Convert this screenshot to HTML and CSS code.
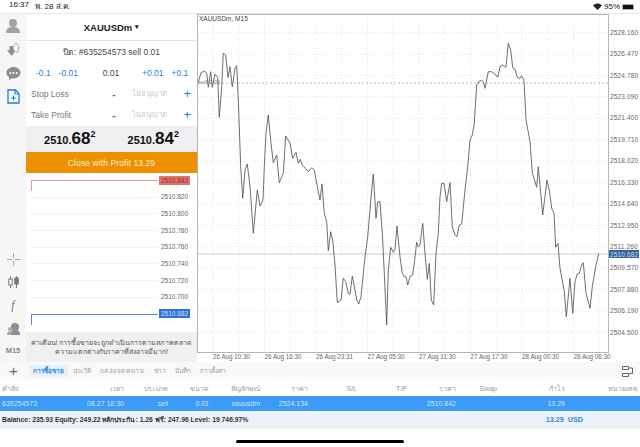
FILE: index.html
```html
<!DOCTYPE html>
<html lang="th">
<head>
<meta charset="utf-8">
<title>XAUUSDm</title>
<link rel="stylesheet" href="styles.css">
</head>
<body>
<div class="status">
  <span class="status-left"><span>16:37</span><span>พ. 28 ส.ค.</span></span>
  <span class="status-right">
    <svg class="wifi" width="9" height="7" viewBox="0 0 9 7"><path d="M0 2.400A6.500 6.500 0 0 1 9 2.400L4.500 7Z" fill="#222"/></svg>
    <span>95%</span>
    <span class="battery"><span class="battery-fill"></span></span>
  </span>
</div>
<div class="main">
  <nav class="rail">
    <div class="rail-group">
      <svg class="rail-icon" width="16" height="16" viewBox="0 0 16 16"><circle cx="8" cy="5" r="4" fill="#a3a3a3"/><path d="M1 15c0-5 3-6 7-6s7 1 7 6z" fill="#a3a3a3"/></svg>
      <svg class="rail-icon" width="16" height="16" viewBox="0 0 16 16"><path d="M2 8h2.500V4h4v4H11l-4.500 6z" fill="#8e8e8e"/><path d="M9 6h-1.500l3.500-5 3.500 5H13v4h-2.500" fill="#fff" stroke="#a0a0a0" stroke-width=".8"/></svg>
      <svg class="rail-icon" width="15" height="15" viewBox="0 0 15 15"><path d="M7.500 1C3.500 1 .5 3.500.5 6.800c0 2 1.100 3.700 2.800 4.700L3 14l3.300-1.700c.4 0 .8.100 1.200.100 4 0 7-2.500 7-5.600S11.500 1 7.500 1z" fill="#8e8e8e"/><circle cx="4.300" cy="7" r="1" fill="#fff"/><circle cx="7.500" cy="7" r="1" fill="#fff"/><circle cx="10.700" cy="7" r="1" fill="#fff"/></svg>
      <svg class="rail-icon" width="13" height="15" viewBox="0 0 13 15"><path d="M1 1h7.500L12 4.500V14H1z" fill="#fff" stroke="#1a7fe8" stroke-width="1.300"/><path d="M8 1v4h4M6.500 6.500v5M4 9h5" fill="none" stroke="#1a7fe8" stroke-width="1.200"/></svg>
    </div>
    <div class="rail-group rail-group-low">
      <svg class="rail-icon" width="13" height="13" viewBox="0 0 13 13"><path d="M6.500 0v5M6.500 8v5M0 6.500h5M8 6.500h5" stroke="#a8a8a8" stroke-width="1"/></svg>
      <svg class="rail-icon" width="11" height="12" viewBox="0 0 11 12"><path d="M2.500 0v12M8.500 0v12" stroke="#777"/><rect x=".8" y="3" width="3.400" height="6" fill="#fff" stroke="#777"/><rect x="6.800" y="2" width="3.400" height="6" fill="#777" stroke="#777"/></svg>
      <span class="rail-f">f</span>
      <svg class="rail-icon" width="13" height="14" viewBox="0 0 13 14"><circle cx="8" cy="5" r="4" fill="#8e8e8e"/><path d="M3 13c0-4 2-5 5-5s5 1 5 5z" fill="#8e8e8e"/><circle cx="3" cy="7" r="2" fill="#a8a8a8"/><path d="M0 13c0-3 1-4 3-4l1 4z" fill="#a8a8a8"/></svg>
      <span class="rail-tf">M15</span>
    </div>
  </nav>

  <section class="panel">
    <header class="symbol">XAUUSDm <span class="caret">▾</span></header>
    <div class="ticket">ปิด: #635254573 sell 0.01</div>
    <div class="lots">
      <span class="lot-group"><span>-0.1</span><span>-0.01</span></span>
      <span class="lot-value">0.01</span>
      <span class="lot-group"><span>+0.01</span><span>+0.1</span></span>
    </div>
    <div class="level">
      <span class="level-name">Stop Loss</span>
      <span class="level-minus">-</span>
      <span class="level-value">ไม่อนุญาต</span>
      <span class="level-plus">+</span>
    </div>
    <div class="level">
      <span class="level-name">Take Profit</span>
      <span class="level-minus">-</span>
      <span class="level-value">ไม่อนุญาต</span>
      <span class="level-plus">+</span>
    </div>
    <div class="quotes">
      <span class="quote">2510.<b>68</b><sup>2</sup></span>
      <span class="quote">2510.<b>84</b><sup>2</sup></span>
    </div>
    <button class="close-btn">Close with Profit 13.29</button>
    <div class="ladder">
      <div class="rung rung-ask"><i></i><span>2510.842</span></div>
      <div class="rung"><i></i><span>2510.820</span></div>
      <div class="rung"><i></i><span>2510.800</span></div>
      <div class="rung"><i></i><span>2510.780</span></div>
      <div class="rung"><i></i><span>2510.760</span></div>
      <div class="rung"><i></i><span>2510.740</span></div>
      <div class="rung"><i></i><span>2510.720</span></div>
      <div class="rung"><i></i><span>2510.700</span></div>
      <div class="rung rung-bid"><i></i><span>2510.682</span></div>
    </div>
    <div class="warning"><span>ค่าเตือน! การซื้อขายจะถูกดำเนินการตามสภาพตลาด</span><span>ความแตกต่างกับราคาที่ส่งอาจมีมาก!</span></div>
  </section>

  <svg class="chart" width="443" height="348" viewBox="197 14 443 348">
    <g class="grid">
      <path d="M198 32.700H608M198 54H608M198 75.300H608M198 96.700H608M198 118H608M198 139.500H608M198 161H608M198 182.300H608M198 204H608M198 225.300H608M198 246.700H608M198 268H608M198 289.300H608M198 311H608M198 332.300H608"/>
      <path d="M213 15V352M238.800 15V352M264.500 15V352M290.300 15V352M316 15V352M341.800 15V352M367.500 15V352M393.300 15V352M419 15V352M444.800 15V352M470.500 15V352M496.300 15V352M522 15V352M547.800 15V352M573.500 15V352M599.300 15V352"/>
    </g>
    <path class="open-line" d="M198 83H608"/>
    <path class="price-line" d="M198 254H608"/>
    <text class="chart-title" x="199" y="21">XAUUSDm, M15</text>
    <text class="open-label" x="198" y="84">sell 0.01</text>
    <polyline class="series" points="198.300,81.700 201,72.700 204.300,71 206.700,73.300 208.300,87.300 210.700,71.700 212.300,87.300 215,74 217.700,77.300 219.300,117.300 221.700,86.700 223.300,53.300 225.700,55 228,77.300 230,66.700 232.300,86.700 235,68.300 236.700,65.700 238.300,100 240.700,166.700 242.700,198.300 245,170 247.300,164 250,186.700 253.300,233.300 257.300,190 260,206 263,200 264.300,166.700 266,133.300 268.300,115 271,143.300 273.300,162.700 276.700,155 279.300,182.700 283.300,173.300 285.700,136 290,143.300 292.700,158.300 296,152.300 298.300,163.300 300.300,159.300 302.300,165 308.300,171.700 311.700,167.700 314.300,170 317.700,188.300 320,200 322,184 324.300,213.300 326.700,221.700 328.300,250.700 330.700,231.700 332.700,240 335,265 337.300,302.700 341,300 343.300,278.300 345.700,281.700 348.300,293.300 350,294.300 352.300,276 355,290 356.700,300 358.700,304 361,296.700 365,256.700 367.700,236.700 371.700,190 373.300,174 376,218.300 377.700,201.700 380,201.700 382.300,233.300 384.300,273.300 386.700,325 388.300,270 390.700,247.300 393.300,252.300 395,249.300 397,226 400,256.700 402.300,273.300 404.300,276.700 406,276.700 407.700,285 410.300,276 412.700,275 414.300,263.300 416.700,242.300 418.300,246.700 420,245 422.700,223.300 425,253.300 427.300,279.300 429.300,263.300 431.300,300 433.700,305 436,253.300 438.300,233.300 440,196.700 441.700,183.300 444,183.300 446.700,201.700 450,182.700 452.300,226.700 455,235 457,236.700 459.300,225 461.700,224 465,190 467.700,166.700 470,140 472.300,135 474.300,123.300 476.700,85 479.300,81 481.700,80 483.300,81.700 485,88.300 488.300,71.700 491.700,71.700 495,74 497.700,77.300 500,66.700 502.700,65 506,67.300 508.300,43.300 510.700,50 512.700,67.700 515,69 517.300,77.300 520,78.300 521.700,75.700 524,80 526,120 530,141.700 532.300,172.700 536.700,187.300 538.300,166.700 542.700,215 547,180 549.300,190 551.700,208.300 554,213.300 555.700,247.300 558,243.300 560,268.300 564.300,291.700 566.300,316.700 570,278.300 572.700,313.300 575,281.700 577.300,274 579.300,273.300 581.700,265 583.300,262.700 586,293.300 590,308.300 592.300,286.700 596,265 598.700,253.300"/>
    <rect class="frame" x="197.500" y="14.500" width="411" height="338"/>
    <g class="axis">
      <text x="610" y="35">2528.160</text>
      <text x="610" y="56.300">2526.470</text>
      <text x="610" y="77.700">2524.780</text>
      <text x="610" y="99">2523.090</text>
      <text x="610" y="120.300">2521.400</text>
      <text x="610" y="142">2519.710</text>
      <text x="610" y="163.300">2518.020</text>
      <text x="610" y="184.700">2516.330</text>
      <text x="610" y="206.300">2514.640</text>
      <text x="610" y="227.700">2512.950</text>
      <text x="610" y="249">2511.260</text>
      <text x="610" y="270.300">2509.570</text>
      <text x="610" y="291.700">2507.880</text>
      <text x="610" y="313.300">2506.190</text>
      <text x="610" y="334.700">2504.500</text>
    </g>
    <rect class="bid-tag" x="609" y="250" width="30" height="8"/>
    <text class="bid-text" x="610" y="256.500">2510.682</text>
    <g class="axis axis-time">
      <text x="213" y="359">26 Aug 10:30</text>
      <text x="264.500" y="359">26 Aug 16:30</text>
      <text x="316" y="359">26 Aug 23:31</text>
      <text x="367.500" y="359">27 Aug 05:30</text>
      <text x="419" y="359">27 Aug 11:30</text>
      <text x="470.500" y="359">27 Aug 17:30</text>
      <text x="522" y="359">28 Aug 00:30</text>
      <text x="573.500" y="359">28 Aug 06:30</text>
    </g>
  </svg>
</div>

<div class="tabs">
  <span class="tab-add">+</span>
  <span class="tab tab-active">การซื้อขาย</span>
  <span class="tab">ประวัติ</span>
  <span class="tab tab-wide">กล่องจดหมาย</span>
  <span class="tab">ข่าว</span>
  <span class="tab">บันทึก</span>
  <span class="tab">การตั้งค่า</span>
  <svg class="tab-icon" width="11" height="11" viewBox="0 0 11 11"><path d="M.5.500h6v3h-6zM.5 7.500h6v3h-6zM6.500 2h4v5.500h-4" fill="none" stroke="#555" stroke-width=".9"/></svg>
</div>

<div class="row row-head">
  <span class="c c1">คำสั่ง</span><span class="c c2">เวลา</span><span class="c c3">ประเภท</span><span class="c c4">ขนาด</span><span class="c c5">สัญลักษณ์</span><span class="c c6">ราคา</span><span class="c c7">S/L</span><span class="c c8">T/P</span><span class="c c9">ราคา</span><span class="c c10">Swap</span><span class="c c11">กำไร</span><span class="c c12">หมายเหตุ</span>
</div>
<div class="row row-sel">
  <span class="c c1">635254573</span><span class="c c2">08.27 18:30</span><span class="c c3">sell</span><span class="c c4">0.01</span><span class="c c5">xauusdm</span><span class="c c6">2524.134</span><span class="c c7"></span><span class="c c8"></span><span class="c c9">2510.842</span><span class="c c10"></span><span class="c c11">13.29</span><span class="c c12"></span>
</div>
<div class="balance">
  <span>Balance: 235.93 Equity: 249.22 หลักประกัน: 1.26 ฟรี: 247.96 Level: 19 746.97%</span>
  <span class="balance-profit">13.29&nbsp; USD</span>
</div>
<div class="home"><span class="home-bar"></span></div>
</body>
</html>
```

FILE: styles.css
```css
* { box-sizing: border-box; }
html, body { margin: 0; padding: 0; }
body {
  width: 640px;
  height: 447px;
  overflow: hidden;
  background: #fff;
  font-family: "Liberation Sans", "Noto Sans", "Noto Sans CJK SC", sans-serif;
  color: #333;
}
.status {
  height: 13px;
  display: flex;
  justify-content: space-between;
  align-items: center;
  padding: 0 6px 0 9px;
  font-size: 8px;
  color: #222;
}
.status-left { display: flex; gap: 6px; }
.status-right { display: flex; align-items: center; gap: 2px; }
.battery { width: 12px; height: 6px; border: 1px solid #aaa; border-radius: 1px; display: flex; }
.battery-fill { flex: 1; background: #111; }

.main { display: flex; height: 349px; background: #fff; border-top: 1px solid #e8e8e8; }
.rail {
  width: 26px;
  flex: none;
  display: flex;
  flex-direction: column;
  justify-content: space-between;
  align-items: center;
  padding: 4px 0 7px;
  background: #f6f6f6;
}
.rail-group { display: flex; flex-direction: column; align-items: center; gap: 8px; }
.rail-group-low { gap: 10px; }
.rail-icon { display: block; flex: none; }
.rail-f { font: italic 12px "Liberation Serif", serif; color: #777; line-height: 14px; }
.rail-tf { font-size: 7.5px; font-weight: bold; color: #888; line-height: 9px; }

.panel { width: 171px; flex: none; display: flex; flex-direction: column; background: #fff; }
.symbol {
  height: 27px;
  flex: none;
  display: flex;
  align-items: center;
  justify-content: center;
  gap: 3px;
  border-bottom: 1px solid #e4e4e4;
  font-size: 9.5px;
  font-weight: bold;
  color: #222;
}
.caret { font-size: 7px; }
.ticket { height: 21px; flex: none; display: flex; align-items: center; justify-content: center; font-size: 8.5px; color: #444; }
.lots { height: 21px; flex: none; display: flex; align-items: center; justify-content: space-between; padding: 0 10px; font-size: 8.5px; color: #1a80e8; }
.lot-group { display: flex; gap: 8px; width: 44px; }
.lot-group:last-child { width: 45px; }
.lot-value { color: #444; }
.level { height: 21px; flex: none; display: flex; align-items: center; padding: 0 6px 0 5px; font-size: 8.5px; color: #777; }
.level-name { width: 81px; }
.level-minus { width: 10px; color: #1a80e8; font-weight: bold; font-size: 11px; }
.level-value { width: 55px; text-align: center; color: #ccc; font-size: 8px; }
.level-plus { color: #1a80e8; font-size: 13px; text-align: right; flex: 1; line-height: 1; }
.quotes { height: 26px; flex: none; display: flex; align-items: center; justify-content: space-around; padding: 0 2px; background: #f0f0f3; font-size: 11px; font-weight: bold; color: #111; margin-top: 1px; }
.quote { display: inline-flex; align-items: baseline; }
.quote b { font-size: 17px; }
.quote sup { font-size: 9px; vertical-align: baseline; align-self: flex-start; line-height: 11px; }
.close-btn { height: 21px; flex: none; border: 0; padding: 0; background: #ee9000; color: #fdeccf; font: 8.5px "Liberation Sans", sans-serif; letter-spacing: .1px; }

.ladder { flex: 1; display: flex; flex-direction: column; padding: 2.500px 7px 0 5px; font-size: 6.5px; color: #666; }
.rung { height: 16.700px; flex: none; display: flex; align-items: flex-start; }
.rung i { flex: 1; height: 0; margin: 4.500px 1px 0 0; border-top: 1px dotted #e6e6e6; }
.rung span { width: 31px; height: 9px; line-height: 9px; text-align: center; }
.rung-ask i { height: 11px; border-top: 1px solid #e09a90; border-left: 1px solid #e09a90; }
.rung-ask span { background: #e2736a; color: #8d2f28; }
.rung-bid i { height: 11px; border-top: 1px solid #4a8fe0; border-left: 1px solid #4a8fe0; }
.rung-bid span { background: #2d74d8; color: #cfe0f7; }
.warning { height: 30px; flex: none; display: flex; flex-direction: column; align-items: center; justify-content: center; background: #f0f0f0; font-size: 7px; line-height: 9.500px; color: #555; white-space: nowrap; }

.chart { display: block; flex: none; background: #fff; }
.grid path { fill: none; stroke: #e6e6e6; stroke-width: 1; stroke-dasharray: 1 2; }
.open-line { fill: none; stroke: #bbb; stroke-width: 1; stroke-dasharray: 2 2; }
.price-line { fill: none; stroke: #ccd; stroke-width: 1; }
.frame { fill: none; stroke: #b5b5b5; stroke-width: 1; }
.series { fill: none; stroke: #555; stroke-width: .85; stroke-linejoin: round; }
.chart-title { font-size: 6.5px; fill: #444; }
.open-label { font-size: 6px; fill: #888; }
.axis text { font-size: 6.5px; fill: #666; letter-spacing: .15px; }
.axis-time text { letter-spacing: 0; font-size: 6.3px; }
.bid-tag { fill: #33659f; }
.bid-text { font-size: 6.5px; fill: #cfdcf0; letter-spacing: .15px; }

.tabs { height: 18px; display: flex; align-items: center; gap: 9px; padding: 0 7px; background: #f9f9f9; font-size: 6.5px; color: #999; }
.tab-add { width: 13px; color: #666; font-size: 15px; line-height: 14px; text-align: center; }
.tab { white-space: nowrap; }
.tab-active { padding: 1px 4px; margin-right: -4.500px; background: #e6f1fd; color: #2d8ae8; font-weight: bold; }
.tab-wide { letter-spacing: .6px; }
.tab-icon { margin-left: auto; }

.row { height: 16px; display: flex; align-items: center; font-size: 7px; }
.row-head { color: #999; background: #fff; }
.row-sel { height: 15px; background: #3d9bf6; color: #cfe6fd; }
.c { flex: none; white-space: nowrap; }
.c1 { width: 43px; padding-left: 2px; }
.c2 { width: 81px; text-align: right; }
.c3 { width: 44px; text-align: right; }
.c4 { width: 41px; text-align: right; }
.c5 { width: 51px; text-align: right; }
.c6 { width: 48px; text-align: right; }
.c7 { width: 49px; text-align: right; }
.c8 { width: 50px; text-align: right; }
.c9 { width: 49px; text-align: right; }
.c10 { width: 41px; text-align: right; }
.c11 { width: 68px; text-align: right; }
.c12 { width: 75px; text-align: right; padding-right: 2px; }
.balance { height: 17px; display: flex; align-items: center; padding-left: 2px; background: #ecf2f9; font-size: 6.8px; font-weight: bold; color: #333; }
.balance-profit { margin-left: auto; margin-right: 57px; color: #2d8ae8; font-size: 7.2px; }
.home { height: 19px; display: flex; justify-content: center; padding-top: 11px; border-top: 1px solid #f4f4f4; }
.home-bar { width: 168px; height: 3px; border-radius: 2px; background: #000; }
```
